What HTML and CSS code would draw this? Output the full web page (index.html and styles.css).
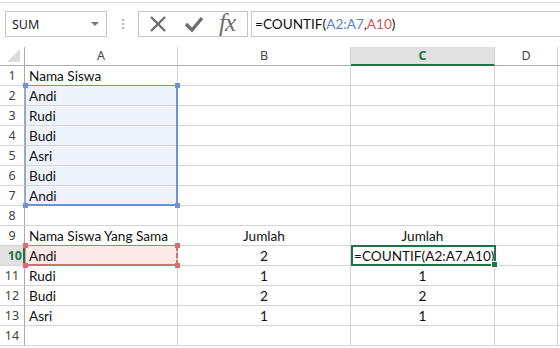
FILE: index.html
```html
<!DOCTYPE html>
<html>
<head>
<meta charset="utf-8">
<link rel="stylesheet" href="styles.css">
</head>
<body>
<div class="app">
  <div class="topline"></div>
  <div class="toolbar">
    <div class="namebox"><span>SUM</span><span class="dd"></span></div>
    <div class="dots"><i></i><i></i><i></i></div>
    <div class="fbtns">
      <svg class="ic" width="20" height="20" viewBox="0 0 20 20"><path d="M3 3 L17 17 M17 3 L3 17" stroke="#6e6e6e" stroke-width="2.4" fill="none"/></svg>
      <svg class="ic" width="20" height="20" viewBox="0 0 20 20"><path d="M2 10 L8 16 L18 4" stroke="#6e6e6e" stroke-width="3.4" fill="none" stroke-linejoin="miter"/></svg>
      <span class="fx">fx</span>
    </div>
    <div class="finput">=COUNTIF(<span class="rb">A2:A7</span>,<span class="rr">A10</span>)</div>
  </div>
  <div class="sheet">
    <div class="grid">
      <div class="corner"><span class="tri"></span></div>
      <div class="ch">A</div><div class="ch">B</div><div class="ch sel">C</div><div class="ch">D</div><div class="ch last"></div>

      <div class="rh">1</div><div class="c">Nama Siswa</div><div class="c"></div><div class="c"></div><div class="c"></div><div class="c last"></div>
      <div class="rh">2</div><div class="c hb">Andi</div><div class="c"></div><div class="c"></div><div class="c"></div><div class="c last"></div>
      <div class="rh">3</div><div class="c hb">Rudi</div><div class="c"></div><div class="c"></div><div class="c"></div><div class="c last"></div>
      <div class="rh">4</div><div class="c hb">Budi</div><div class="c"></div><div class="c"></div><div class="c"></div><div class="c last"></div>
      <div class="rh">5</div><div class="c hb">Asri</div><div class="c"></div><div class="c"></div><div class="c"></div><div class="c last"></div>
      <div class="rh">6</div><div class="c hb">Budi</div><div class="c"></div><div class="c"></div><div class="c"></div><div class="c last"></div>
      <div class="rh">7</div><div class="c hb">Andi</div><div class="c"></div><div class="c"></div><div class="c"></div><div class="c last"></div>
      <div class="rh">8</div><div class="c"></div><div class="c"></div><div class="c"></div><div class="c"></div><div class="c last"></div>
      <div class="rh">9</div><div class="c">Nama Siswa Yang Sama</div><div class="c ctr">Jumlah</div><div class="c ctr">Jumlah</div><div class="c"></div><div class="c last"></div>
      <div class="rh sel">10</div><div class="c hr">Andi</div><div class="c ctr">2</div><div class="c ovf">=COUNTIF(A2:A7,A10)</div><div class="c"></div><div class="c last"></div>
      <div class="rh">11</div><div class="c">Rudi</div><div class="c ctr">1</div><div class="c ctr">1</div><div class="c"></div><div class="c last"></div>
      <div class="rh">12</div><div class="c">Budi</div><div class="c ctr">2</div><div class="c ctr">2</div><div class="c"></div><div class="c last"></div>
      <div class="rh">13</div><div class="c">Asri</div><div class="c ctr">1</div><div class="c ctr">1</div><div class="c"></div><div class="c last"></div>
      <div class="rh">14</div><div class="c"></div><div class="c"></div><div class="c"></div><div class="c"></div><div class="c last"></div>
    </div>
    <div class="range blue"><i class="h tl"></i><i class="h tr"></i><i class="h bl"></i><i class="h br"></i></div>
    <div class="range red"><i class="h tl"></i><i class="h tr"></i><i class="h bl"></i><i class="h br"></i></div>
    <div class="active"><i class="fill"></i></div>
  </div>
</div>
</body>
</html>
```
FILE: styles.css
```css
* { box-sizing: border-box; }
html, body { margin: 0; padding: 0; background: #fff; }
.app { width: 560px; height: 348px; overflow: hidden; position: relative; }
.topline { height: 3px; border-bottom: 1px solid #d6d6d6; }
.toolbar { display: flex; align-items: flex-start; height: 44px; padding: 8px 0 0 5px; }
.namebox { width: 102px; height: 26px; border: 1px solid #c6c6c6; display: flex; align-items: center; justify-content: space-between; padding: 0 6px 0 6px; font-family: "Noto Sans", sans-serif; font-size: 12.5px; color: #222; }
.dd { width: 0; height: 0; border-left: 4px solid transparent; border-right: 4px solid transparent; border-top: 4px solid #777; margin-right: 1px; }
.dots { width: 31px; height: 26px; display: flex; flex-direction: column; align-items: center; justify-content: center; gap: 2px; }
.dots i { width: 2px; height: 2px; background: #b0b0b0; display: block; }
.fbtns { width: 110px; height: 26px; border: 1px solid #c6c6c6; display: flex; align-items: center; padding-left: 9px; gap: 16px; }
.fx { font-family: "Liberation Serif", serif; font-style: italic; font-size: 25px; color: #6e6e6e; letter-spacing: -1px; margin-left: -1px; line-height: 1; margin-top: -3px; }
.finput { flex: 1; height: 26px; margin-left: 3px; border: 1px solid #c6c6c6; border-right: none; font-family: "Lato", sans-serif; font-size: 13.6px; color: #111; padding: 4px 0 0 3px; }
.rb { color: #5b82cf; }
.rr { color: #d2565b; }
.sheet { position: relative; }
.grid { display: grid; grid-template-columns: 25px 153px 173px 144px 63px 2px; grid-template-rows: 19px repeat(14, 20px); }
.corner { border-right: 1px solid #ababab; border-bottom: 1px solid #ababab; position: relative; }
.tri { position: absolute; right: 4px; bottom: 3px; width: 0; height: 0; border-left: 13px solid transparent; border-bottom: 13px solid #dcdcdc; }
.ch { border-right: 1px solid #d4d4d4; border-bottom: 1px solid #ababab; font-family: "Noto Sans", sans-serif; font-size: 12.5px; color: #444; text-align: center; line-height: 18px; }
.ch.sel { background: #e1e1e1; border-bottom: 2px solid #217346; color: #217346; font-weight: bold; }
.rh { border-right: 1px solid #ababab; border-bottom: 1px solid #d4d4d4; font-family: "Noto Sans", sans-serif; font-size: 12.5px; color: #444; text-align: center; line-height: 20px; }
.rh.sel { background: #e1e1e1; border-right: 2px solid #217346; color: #217346; font-weight: bold; text-align: right; padding-right: 1px; }
.c { border-right: 1px solid #d4d4d4; border-bottom: 1px solid #d4d4d4; font-family: "Lato", sans-serif; font-size: 13.6px; color: #111; line-height: 21px; padding-left: 4px; white-space: nowrap; }
.c.ctr { text-align: center; padding-left: 0; }
.c.hb { background: #eef3fc; }
.c.hr { background: #fce9ea; }
.c.ovf { overflow: visible; position: relative; z-index: 2; padding-left: 3px; }
.last { border-right: none; }
.range { position: absolute; left: 25px; width: 153px; }
.range.blue { top: 38px; height: 121px; border: 1px solid #8aa5de; border-top-color: #6f91d6; border-right: 2px solid #6f91d6; border-bottom: 2px solid #6f91d6; }
.range.red { top: 198px; height: 21px; border: 1px solid #e29a9c; border-top-color: #d96d70; border-right: 2px dashed #d96d70; border-bottom: 2px solid #d96d70; }
.h { position: absolute; width: 5px; height: 5px; display: block; }
.blue .h { background: #6f91d6; }
.red .h { background: #d96d70; }
.h.tl { left: -3px; top: -3px; }
.h.tr { right: -4px; top: -3px; }
.h.bl { left: -3px; bottom: -4px; }
.h.br { right: -4px; bottom: -4px; }
.active { position: absolute; left: 351px; top: 198px; width: 145px; height: 21px; border: 2px solid #217346; z-index: 3; }
.fill { position: absolute; right: -4px; bottom: -4px; width: 5px; height: 5px; background: #217346; border: 1px solid #fff; box-sizing: content-box; display: block; }
```
